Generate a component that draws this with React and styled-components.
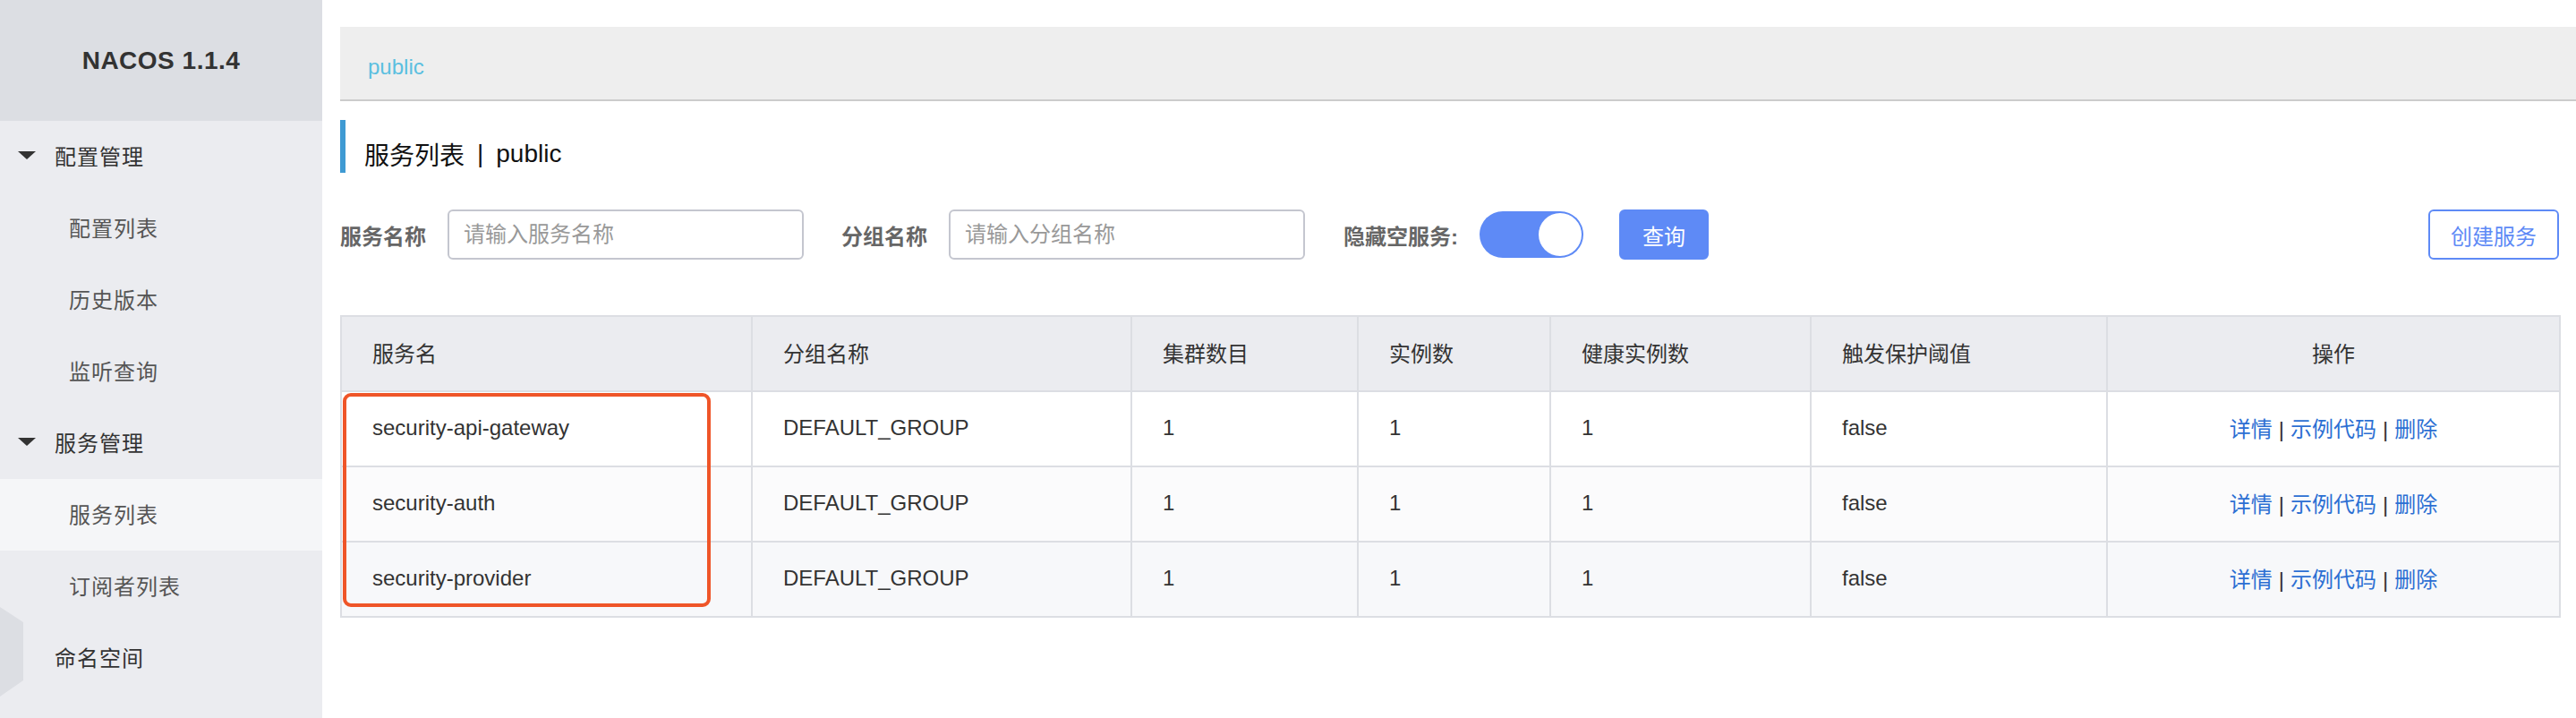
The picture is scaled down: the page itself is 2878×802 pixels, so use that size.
import React from "react";
import styled, { createGlobalStyle } from "styled-components";

const GlobalStyle = createGlobalStyle`
  html, body { margin: 0; padding: 0; background: #fff; }
  body {
    font-family: "Liberation Sans", "Noto Sans CJK SC", Arial, sans-serif;
    color: #333;
  }
  * { box-sizing: border-box; }
`;

const FONT = `"Liberation Sans", "Noto Sans CJK SC", Arial, sans-serif`;
const PRIMARY = "#5e8af6";

const Page = styled.div`
  display: flex;
  width: 100%;
  height: 802px;
  overflow: hidden;
`;

const Sidebar = styled.aside`
  position: relative;
  flex: 0 0 360px;
  height: 100%;
  background: #ebecf0;
  display: flex;
  flex-direction: column;
`;

const Brand = styled.div`
  height: 135px;
  flex: 0 0 135px;
  background: #dcdee3;
  display: flex;
  align-items: center;
  justify-content: center;
  font-size: 28px;
  font-weight: bold;
  color: #333;
  letter-spacing: 0.5px;
`;

const MenuRow = styled.div`
  height: 80px;
  flex: 0 0 80px;
  display: flex;
  align-items: center;
  padding-left: ${(p) => (p.$indent ? "61px" : p.$group ? "20px" : "77px")};
  padding-bottom: 4px;
  font-size: 24px;
  color: ${(p) => (p.$group ? "#333" : "#555")};
  background: ${(p) => (p.$active ? "#f5f6f8" : "transparent")};
  letter-spacing: 1px;
`;

const Caret = styled.span`
  width: 0;
  height: 0;
  border-left: 10px solid transparent;
  border-right: 10px solid transparent;
  border-top: 9px solid #333;
  margin-right: 21px;
`;

const CollapseHandle = styled.div`
  position: absolute;
  left: 0;
  top: 678px;
  width: 26px;
  height: 100px;
  background: #dcdee3;
  clip-path: polygon(0 0, 100% 17%, 100% 82%, 0 100%);
`;

const Main = styled.main`
  flex: 1;
  min-width: 0;
  margin-left: 20px;
  display: flex;
  flex-direction: column;
`;

const Breadcrumb = styled.div`
  margin-top: 30px;
  height: 83px;
  background: #eeeeee;
  border-bottom: 2px solid #cccccc;
  display: flex;
  align-items: center;
  padding-left: 31px;
  padding-top: 8px;
  font-size: 24px;
  color: #5bbfe0;
`;

const Content = styled.div`
  padding-right: 19px;
  display: flex;
  flex-direction: column;
`;

const Title = styled.div`
  margin-top: 21px;
  height: 59px;
  border-left: 6px solid #3f9ad3;
  padding-left: 21px;
  padding-top: 16px;
  display: flex;
  align-items: center;
  font-size: 28px;
  color: #111;
`;

const TitleSep = styled.span`
  margin: 0 14px;
`;

const FilterBar = styled.div`
  margin-top: 41px;
  height: 56px;
  display: flex;
  align-items: center;
`;

const FilterItem = styled.div`
  display: flex;
  align-items: center;
  gap: 24px;
  margin-right: ${(p) => p.$gap || 42}px;
`;

const Label = styled.span`
  font-size: 24px;
  font-weight: bold;
  color: #666;
`;

const Input = styled.input`
  width: 398px;
  height: 56px;
  border: 2px solid #c4c6cf;
  border-radius: 6px;
  padding: 0 16px;
  font-family: ${FONT};
  font-size: 24px;
  color: #333;
  outline: none;
  &::placeholder { color: #999; }
`;

const Switch = styled.div`
  width: 116px;
  height: 52px;
  border-radius: 26px;
  background: ${PRIMARY};
  display: flex;
  align-items: center;
  justify-content: flex-end;
  padding: 2px;
`;

const Knob = styled.span`
  width: 48px;
  height: 48px;
  border-radius: 50%;
  background: #fff;
`;

const Button = styled.button`
  height: 56px;
  min-width: ${(p) => (p.$outline ? "146px" : "100px")};
  padding: 0 22px;
  border-radius: 6px;
  font-family: ${FONT};
  font-size: 24px;
  cursor: pointer;
  border: 2px solid ${PRIMARY};
  background: ${(p) => (p.$outline ? "#fff" : PRIMARY)};
  color: ${(p) => (p.$outline ? PRIMARY : "#fff")};
`;

const Spacer = styled.div`
  flex: 1;
`;

const TableWrap = styled.div`
  position: relative;
  margin-top: 62px;
`;

const Table = styled.table`
  width: 100%;
  border-collapse: collapse;
  table-layout: fixed;
  border: 2px solid #dcdee3;
  font-size: 24px;
  color: #333;
`;

const Th = styled.th`
  height: 84px;
  padding: 0 0 3px ${(p) => (p.$center ? 0 : 34)}px;
  background: #ebecf0;
  border: 2px solid #dcdee3;
  font-weight: normal;
  text-align: ${(p) => (p.$center ? "center" : "left")};
  color: #333;
`;

const Tr = styled.tr`
  background: ${(p) => p.$bg};
`;

const Td = styled.td`
  height: 84px;
  padding: 0 0 3px ${(p) => (p.$center ? 0 : 34)}px;
  border: 2px solid #dcdee3;
  text-align: ${(p) => (p.$center ? "center" : "left")};
  white-space: nowrap;
`;

const Link = styled.a`
  color: #2c6fd3;
  text-decoration: none;
  cursor: pointer;
`;

const Sep = styled.span`
  color: #333;
  margin: 0 7px;
`;

const Highlight = styled.div`
  position: absolute;
  left: 3px;
  top: 87px;
  width: 411px;
  height: 239px;
  border: 4px solid #ef5528;
  border-radius: 9px;
  pointer-events: none;
`;

const columns = [
  { title: "服务名", width: 459 },
  { title: "分组名称", width: 424 },
  { title: "集群数目", width: 253 },
  { title: "实例数", width: 215 },
  { title: "健康实例数", width: 291 },
  { title: "触发保护阈值", width: 331 },
  { title: "操作", width: 506, center: true },
];

const rows = [
  { name: "security-api-gateway", bg: "#ffffff" },
  { name: "security-auth", bg: "#fbfbfc" },
  { name: "security-provider", bg: "#f7f8fa" },
];

const menu = [
  { label: "配置管理", group: true, caret: true },
  { label: "配置列表" },
  { label: "历史版本" },
  { label: "监听查询" },
  { label: "服务管理", group: true, caret: true },
  { label: "服务列表", active: true },
  { label: "订阅者列表" },
  { label: "命名空间", group: true, indent: true },
];

export default function App() {
  return (
    <>
      <GlobalStyle />
      <Page>
        <Sidebar>
          <Brand>NACOS 1.1.4</Brand>
          {menu.map((m) => (
            <MenuRow key={m.label} $group={m.group} $active={m.active} $indent={m.indent}>
              {m.caret && <Caret />}
              {m.label}
            </MenuRow>
          ))}
          <CollapseHandle />
        </Sidebar>
        <Main>
          <Breadcrumb>public</Breadcrumb>
          <Content>
            <Title>
              服务列表<TitleSep>|</TitleSep>public
            </Title>
            <FilterBar>
              <FilterItem>
                <Label>服务名称</Label>
                <Input placeholder="请输入服务名称" />
              </FilterItem>
              <FilterItem $gap={43}>
                <Label>分组名称</Label>
                <Input placeholder="请输入分组名称" />
              </FilterItem>
              <FilterItem $gap={40}>
                <Label>隐藏空服务:</Label>
                <Switch>
                  <Knob />
                </Switch>
              </FilterItem>
              <Button>查询</Button>
              <Spacer />
              <Button $outline>创建服务</Button>
            </FilterBar>
            <TableWrap>
              <Table>
                <colgroup>
                  {columns.map((c) => (
                    <col key={c.title} style={{ width: c.width }} />
                  ))}
                </colgroup>
                <thead>
                  <tr>
                    {columns.map((c) => (
                      <Th key={c.title} $center={c.center}>
                        {c.title}
                      </Th>
                    ))}
                  </tr>
                </thead>
                <tbody>
                  {rows.map((r) => (
                    <Tr key={r.name} $bg={r.bg}>
                      <Td>{r.name}</Td>
                      <Td>DEFAULT_GROUP</Td>
                      <Td>1</Td>
                      <Td>1</Td>
                      <Td>1</Td>
                      <Td>false</Td>
                      <Td $center>
                        <Link>详情</Link>
                        <Sep>|</Sep>
                        <Link>示例代码</Link>
                        <Sep>|</Sep>
                        <Link>删除</Link>
                      </Td>
                    </Tr>
                  ))}
                </tbody>
              </Table>
              <Highlight />
            </TableWrap>
          </Content>
        </Main>
      </Page>
    </>
  );
}
